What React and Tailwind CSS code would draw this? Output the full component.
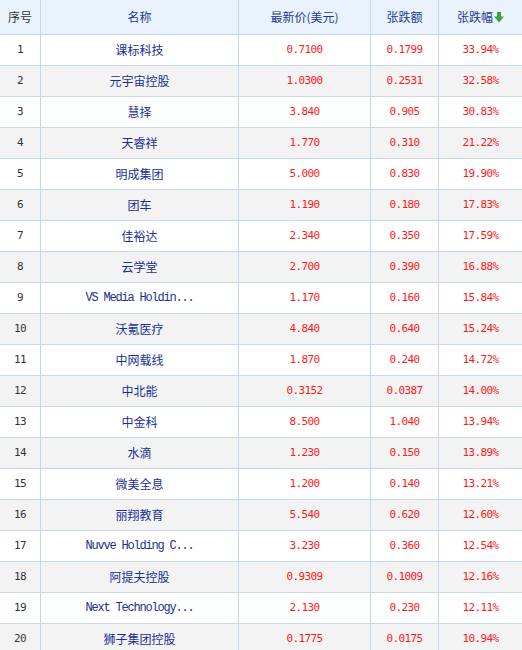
import React from "react";

const ROWS = [
    ["课标科技", "0.7100", "0.1799", "33.94%"],
    ["元宇宙控股", "1.0300", "0.2531", "32.58%"],
    ["慧择", "3.840", "0.905", "30.83%"],
    ["天睿祥", "1.770", "0.310", "21.22%"],
    ["明成集团", "5.000", "0.830", "19.90%"],
    ["团车", "1.190", "0.180", "17.83%"],
    ["佳裕达", "2.340", "0.350", "17.59%"],
    ["云学堂", "2.700", "0.390", "16.88%"],
    ["VS Media Holdin...", "1.170", "0.160", "15.84%"],
    ["沃氪医疗", "4.840", "0.640", "15.24%"],
    ["中网载线", "1.870", "0.240", "14.72%"],
    ["中北能", "0.3152", "0.0387", "14.00%"],
    ["中金科", "8.500", "1.040", "13.94%"],
    ["水滴", "1.230", "0.150", "13.89%"],
    ["微美全息", "1.200", "0.140", "13.21%"],
    ["丽翔教育", "5.540", "0.620", "12.60%"],
    ["Nuvve Holding C...", "3.230", "0.360", "12.54%"],
    ["阿提夫控股", "0.9309", "0.1009", "12.16%"],
    ["Next Technology...", "2.130", "0.230", "12.11%"],
    ["狮子集团控股", "0.1775", "0.0175", "10.94%"],
];

const CJK = "font-['Noto_Sans_CJK_SC',sans-serif]";
const NUM = "font-['DejaVu_Sans_Mono',monospace] text-[11px] tracking-[-0.6px]";
const LATIN = "font-['Liberation_Mono',monospace] text-[12px] tracking-[-1.2px]";

const GRID = "grid grid-cols-[41px_198px_132px_68px_83px]";
const CELL = "flex items-center justify-center border-r border-[#c6d8ef] last:border-r-0";

const ArrowDown = () => (
    <svg width="10" height="11" viewBox="0 0 10 11" className="ml-[1px]">
        <rect x="3" y="0" width="4" height="5" fill="#3aa43a" />
        <path d="M0 4.5 H10 L5 10.5 Z" fill="#3aa43a" />
    </svg>
);

const App = () => {
    return (
        <div className="h-[650px] w-[522px] overflow-hidden bg-white text-[12px]">
            <div className={`${GRID} h-[35px] border-b border-[#c6d8ef] bg-[#eaf3fd] ${CJK}`}>
                <div className={`${CELL} text-[#333]`}>序号</div>
                <div className={`${CELL} text-[#1c3a92]`}>名称</div>
                <div className={`${CELL} text-[#1c3a92]`}>最新价(美元)</div>
                <div className={`${CELL} text-[#1c3a92]`}>张跌额</div>
                <div className={`${CELL} text-[#1c3a92]`}>
                    张跌幅
                    <ArrowDown />
                </div>
            </div>

            {ROWS.map(([name, price, chg, pct], i) => {
                const latin = /^[A-Za-z]/.test(name);
                return (
                    <div
                        key={i}
                        className={`${GRID} h-[31px] border-b border-[#c6d8ef] ${i % 2 === 1 ? "bg-[#f3f3f3]" : "bg-white"}`}
                    >
                        <div className={`${CELL} ${NUM} text-[#333]`}>{i + 1}</div>
                        <div className={`${CELL} text-[#1a2f96] ${latin ? LATIN : CJK}`}>{name}</div>
                        <div className={`${CELL} ${NUM} text-[#ff1a1a]`}>{price}</div>
                        <div className={`${CELL} ${NUM} text-[#ff1a1a]`}>{chg}</div>
                        <div className={`${CELL} ${NUM} text-[#ff1a1a]`}>{pct}</div>
                    </div>
                );
            })}
        </div>
    );
};

export default App;
